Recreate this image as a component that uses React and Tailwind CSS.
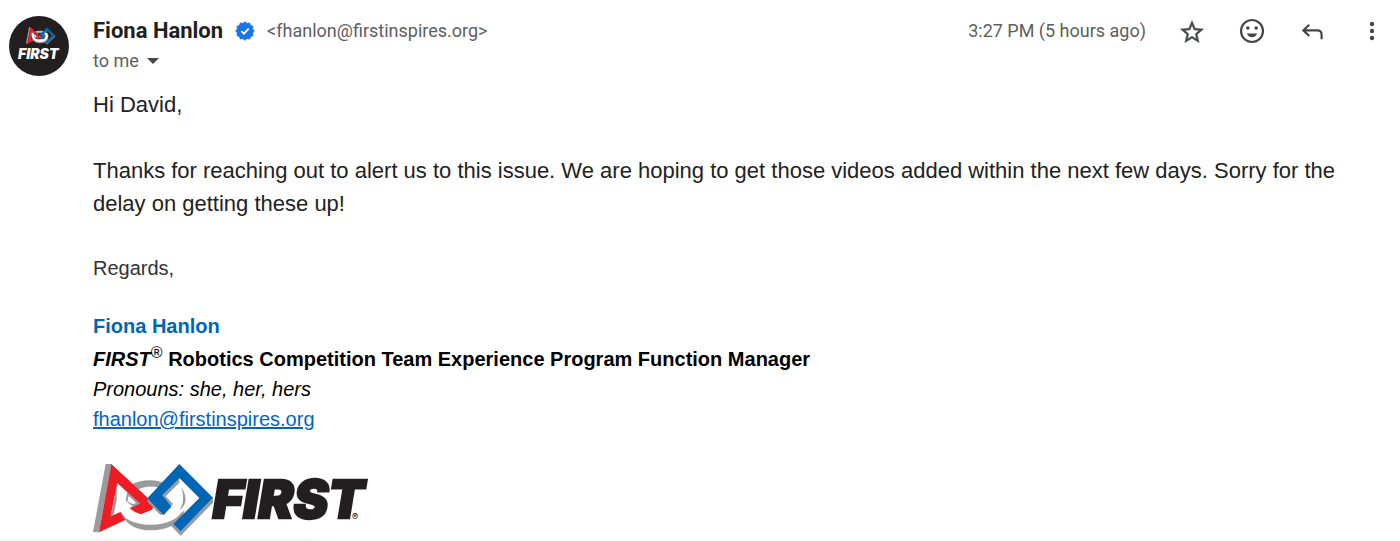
const badgePoints = Array.from({ length: 24 }, (_, i) => {
  const radius = i % 2 ? 8.6 : 10.2;
  const angle = (i * Math.PI) / 12;
  return `${12 + radius * Math.sin(angle)},${12 - radius * Math.cos(angle)}`;
}).join(' ');

function FirstMark() {
  return (
    <g>
      <path fill="#999b9e" d="M62 27H80L42 232L24 231Z" />
      {/* back of the ring */}
      <path fill="#999b9e" d="M134 91Q194 60 256 92L242 104Q197 84 152 106Z" />
      <path fill="#ee1c25" fillRule="evenodd" d="M79 28L208 148L190 163L42 232ZM97 83L77 184L163 146Z" />
      <path fill="#999b9e" d="M97 84L77 184L86 179L104 94ZM128 104L122 137L146 157L169 146Z" />
      <path fill="#fff" d="M131 122L127 139L145 148L153 143Z" />
      {/* front of the ring and its shadow */}
      <path fill="#999b9e" d="M112 182Q136 226 198 226Q278 226 300 166L260 190L150 195Z" />
      <path fill="#fff" d="M98 84Q92 118 97 142Q106 209 197 209Q280 209 299 152Q304 128 286 98L266 96Q280 130 262 156Q240 181 197 181Q151 179 130 151Q112 136 117 108Z" />
      <path fill="#999b9e" d="M288 96Q318 138 283 166Q303 136 288 96Z" />
      <path fill="#ee1c25" d="M79 28L208 148L201 164L168 178Q147 172 134 160L166 146L97 83L79 75Z" />
      {/* diamond */}
      <path fill="#999b9e" d="M283 66V83L242 124L264 147L252 160L225 128ZM188 130V141L226 180L240 178ZM267 207L256 211L287 242L384 143V128L287 228Z" />
      <path fill="#0066b3" d="M283 27L384 128L287 229L265 207L343 129L283 69L232 121L259 155L236 180L187 130Z" />
    </g>
  );
}

function FirstLogo({ className }) {
  return (
    <svg viewBox="24 27 828 219" className={className} role="img" aria-label="FIRST logo">
      <FirstMark />
      <text x="383" y="190" fill="#231f20" stroke="#231f20" strokeWidth="7" fontFamily="Inter, sans-serif" fontSize="157" fontWeight="900" fontStyle="italic">FIRST</text>
      <text x="801" y="194" fill="#231f20" fontFamily="Inter, sans-serif" fontSize="28" fontWeight="600">®</text>
    </svg>
  );
}

function Avatar() {
  return (
    <svg viewBox="0 0 60 60" className="size-15 shrink-0" role="img" aria-label="FIRST">
      <circle cx="30" cy="30" r="30" fill="#231f20" />
      <g transform="translate(15 9) scale(.081)">
        <ellipse cx="197" cy="138" rx="84" ry="54" fill="none" stroke="#fff" strokeWidth="28" />
        <FirstMark />
      </g>
      <text x="9" y="43" fill="#fff" fontFamily="Inter, sans-serif" fontSize="14" fontWeight="900" fontStyle="italic">FIRST</text>
    </svg>
  );
}

function VerifiedBadge() {
  return (
    <svg viewBox="1 1 22 22" className="size-5" role="img" aria-label="Verified sender">
      <polygon points={badgePoints} fill="#1a73e8" stroke="#1a73e8" strokeWidth="1" strokeLinejoin="round" />
      <path d="M8 12.2l2.8 2.8 5.3-5.6" fill="none" stroke="#fff" strokeWidth="2" />
    </svg>
  );
}

function IconButton({ label, children }) {
  return (
    <button type="button" aria-label={label} className="flex size-7 items-center justify-center text-[#444746]">
      {children}
    </button>
  );
}

function MessageActions() {
  return (
    <div className="flex items-center gap-8">
      <IconButton label="Star">
        <svg viewBox="0 -1 24 24" className="size-7" fill="currentColor">
          <path d="M22 9.24l-7.19-.62L12 2 9.19 8.63 2 9.24l5.46 4.73L5.82 21 12 17.27 18.18 21l-1.63-7.03L22 9.24zM12 15.4l-3.76 2.27 1-4.28-3.32-2.88 4.38-.38L12 6.1l1.71 4.04 4.38.38-3.32 2.88 1 4.28L12 15.4z" stroke="currentColor" strokeWidth=".3" />
        </svg>
      </IconButton>
      <IconButton label="Add reaction">
        <svg viewBox="0 0 28 28" className="size-7" fill="currentColor">
          <circle cx="14" cy="14" r="11" fill="none" stroke="currentColor" strokeWidth="2.2" />
          <circle cx="9.8" cy="11" r="1.8" />
          <circle cx="18.2" cy="11" r="1.8" />
          <path d="M8.8 16.6h10.4q-1.4 3.6-5.2 3.6t-5.2-3.6z" />
        </svg>
      </IconButton>
      <IconButton label="Reply">
        <svg viewBox="0 0 28 28" className="size-7" fill="none" stroke="currentColor" strokeWidth="2.2">
          <path d="M11.2 7.8L5.4 13.4L11.2 19M5.4 13.4H19.2Q23.6 13.4 23.6 17.8V22.2" />
        </svg>
      </IconButton>
      <IconButton label="More">
        <svg viewBox="0 0 28 28" className="size-7" fill="currentColor">
          <circle cx="14" cy="7" r="2.2" />
          <circle cx="14" cy="14" r="2.2" />
          <circle cx="14" cy="21" r="2.2" />
        </svg>
      </IconButton>
    </div>
  );
}

export default function App() {
  return (
    <main className="flex gap-6 bg-white pt-4 pl-[9px] font-['Liberation_Sans',Arial,sans-serif] text-[#222]">
      <Avatar />
      <div className="min-w-0 flex-1">
        <header className="flex items-start justify-between pr-3.5 font-['Roboto',sans-serif] text-lg text-[#5e5e5e]">
          <div>
            <div className="flex items-center gap-3">
              <h1 className="text-[22px] leading-[30px] font-bold text-[#1f1f1f]">Fiona Hanlon</h1>
              <VerifiedBadge />
              <span>&lt;fhanlon@firstinspires.org&gt;</span>
            </div>
            <button type="button" className="flex items-center gap-2 leading-[30px]">
              to me
              <svg viewBox="0 0 12 6" className="w-3" fill="#444746" aria-hidden="true">
                <path d="M0 0h12L6 6z" />
              </svg>
            </button>
          </div>
          <div className="flex items-center gap-8 leading-[30px]">
            <time>3:27 PM (5 hours ago)</time>
            <MessageActions />
          </div>
        </header>
        <div className="mt-3 text-[22px] leading-[33px]">
          <p>Hi David,</p>
          <p className="mt-[33px] pr-8">
            Thanks for reaching out to alert us to this issue. We are hoping to get those videos added within the next few days. Sorry for the delay on getting these up!
          </p>
        </div>
        <div className="mt-[33px] text-xl leading-[30px] text-black">
          <p className="text-[#333]">Regards,</p>
          <p className="mt-7 font-bold text-[#0066b3]">Fiona Hanlon</p>
          <p className="mt-[3px] font-bold">
            <i>FIRST</i>
            <sup className="text-base font-normal">®</sup> Robotics Competition Team Experience Program Function Manager
          </p>
          <p className="italic">Pronouns: she, her, hers</p>
          <a href="mailto:fhanlon@firstinspires.org" className="text-[#0563c1] underline">fhanlon@firstinspires.org</a>
        </div>
        <FirstLogo className="mt-[30px] w-[276px]" />
      </div>
      <div className="pointer-events-none fixed bottom-0 left-0 h-1 w-[336px] bg-linear-to-b from-transparent to-black/5 mask-r-from-90%" />
    </main>
  );
}
